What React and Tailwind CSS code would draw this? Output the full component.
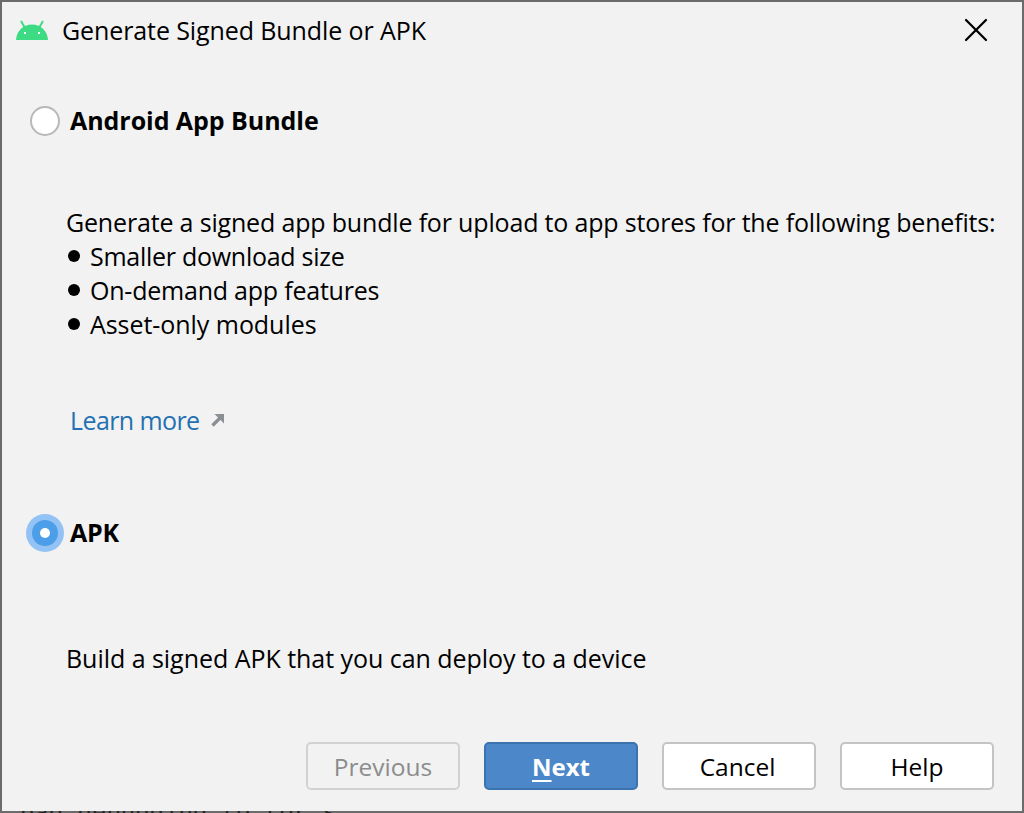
import { X } from 'lucide-react';

function AndroidHead() {
  return (
    <svg width="32" height="21" viewBox="0 0 32 21" className="mb-[2px] shrink-0">
      <path d="M0 20 C0.5 11 7 4.5 16 4.5 C25 4.5 31.5 11 32 20 Z" fill="#3ddc84" />
      <path d="M5 1 L9 8 M27 1 L23 8" stroke="#3ddc84" strokeWidth="2" fill="none" />
      <rect x="8" y="12" width="2" height="2" fill="#fff" />
      <rect x="22" y="12" width="2" height="2" fill="#fff" />
    </svg>
  );
}

function Button({ children, className = '' }) {
  return (
    <button className={`h-12 w-[154px] rounded-[5px] border-2 pt-[2px] leading-none ${className}`}>
      {children}
    </button>
  );
}

function Bullet({ children, className = '' }) {
  return (
    <li className={`flex h-[34px] items-center ${className}`}>
      <span className="ml-[2px] mr-[10px] h-[12px] w-[12px] rounded-full bg-black" />
      {children}
    </li>
  );
}

export default function App() {
  return (
    <div className="relative h-[813px] w-[1024px] overflow-hidden bg-[#6b6b6b] font-['Open_Sans','Noto_Sans',sans-serif] text-black">
      {/* window behind the dialog, only the tops of its text show */}
      <div className="absolute left-[20px] top-[802px] whitespace-pre font-['Liberation_Mono',monospace] text-[24px] leading-[24px] text-[#222222]">
        bad debugging to tor s
      </div>

      <div className="relative ml-[2px] mt-[2px] flex h-[809px] w-[1020px] flex-col bg-[#f2f2f2]">
        {/* title bar */}
        <div className="flex h-[58px] items-center pl-[14px] pr-[26px]">
          <AndroidHead />
          <span className="ml-[14px] text-[25px] tracking-[-0.1px]">Generate Signed Bundle or APK</span>
          <X size={40} strokeWidth={1.35} className="mb-[2px] ml-auto" />
        </div>

        <div className="mt-[21px] flex h-[80px] items-center pl-[28px]">
          <span className="h-[30px] w-[30px] rounded-full border-2 border-[#b8b8b8] bg-white" />
          <span className="ml-[10px] text-[25px] font-bold tracking-[-0.05px]">Android App Bundle</span>
        </div>

        <div className="mt-[44px] pl-[64px] text-[25px] leading-[34px]">
          <p className="whitespace-nowrap tracking-[-0.17px]">Generate a signed app bundle for upload to app stores for the following benefits:</p>
          <ul>
            <Bullet className="tracking-[-0.27px]">Smaller download size</Bullet>
            <Bullet className="tracking-[-0.22px]">On-demand app features</Bullet>
            <Bullet className="tracking-[-0.05px]">Asset-only modules</Bullet>
          </ul>
        </div>

        <div className="mt-[62px] flex items-center pl-[68px] text-[25px] leading-[34px] tracking-[-0.6px] text-[#2470b3]">
          Learn more
          <svg width="14" height="14" viewBox="0 0 14 14" className="ml-[12px]">
            <path d="M1.5 12.5 L9 5" stroke="#8a8f94" strokeWidth="3.4" fill="none" />
            <path d="M3.5 1 H13 V10.5 Z" fill="#8a8f94" />
          </svg>
        </div>

        <div className="mt-[77px] flex items-center pl-[24px]">
          <span className="flex h-[38px] w-[38px] items-center justify-center rounded-full bg-[#93c2f5]">
            <span className="flex h-[26px] w-[26px] items-center justify-center rounded-full bg-[#4d9ee8]">
              <span className="h-[10px] w-[10px] rounded-full bg-white" />
            </span>
          </span>
          <span className="ml-[6px] text-[25px] font-bold tracking-[-0.2px]">APK</span>
        </div>

        <p className="mt-[89px] pl-[64px] text-[25px] leading-[34px] tracking-[-0.04px]">Build a signed APK that you can deploy to a device</p>

        <div className="mb-[21px] mt-auto flex justify-end gap-6 pr-[28px]">
          <Button className="border-[#d2d2d2] text-[24.5px] text-[#8c8c8c]">Previous</Button>
          <Button className="border-[#3b73af] bg-[#4c87c9] text-[24px] font-bold text-white">
            <span className="underline underline-offset-4">N</span>ext
          </Button>
          <Button className="border-[#c4c4c4] bg-white pr-[3px] text-[24.5px]">Cancel</Button>
          <Button className="border-[#c4c4c4] bg-white text-[24.5px]">Help</Button>
        </div>
      </div>
    </div>
  );
}
